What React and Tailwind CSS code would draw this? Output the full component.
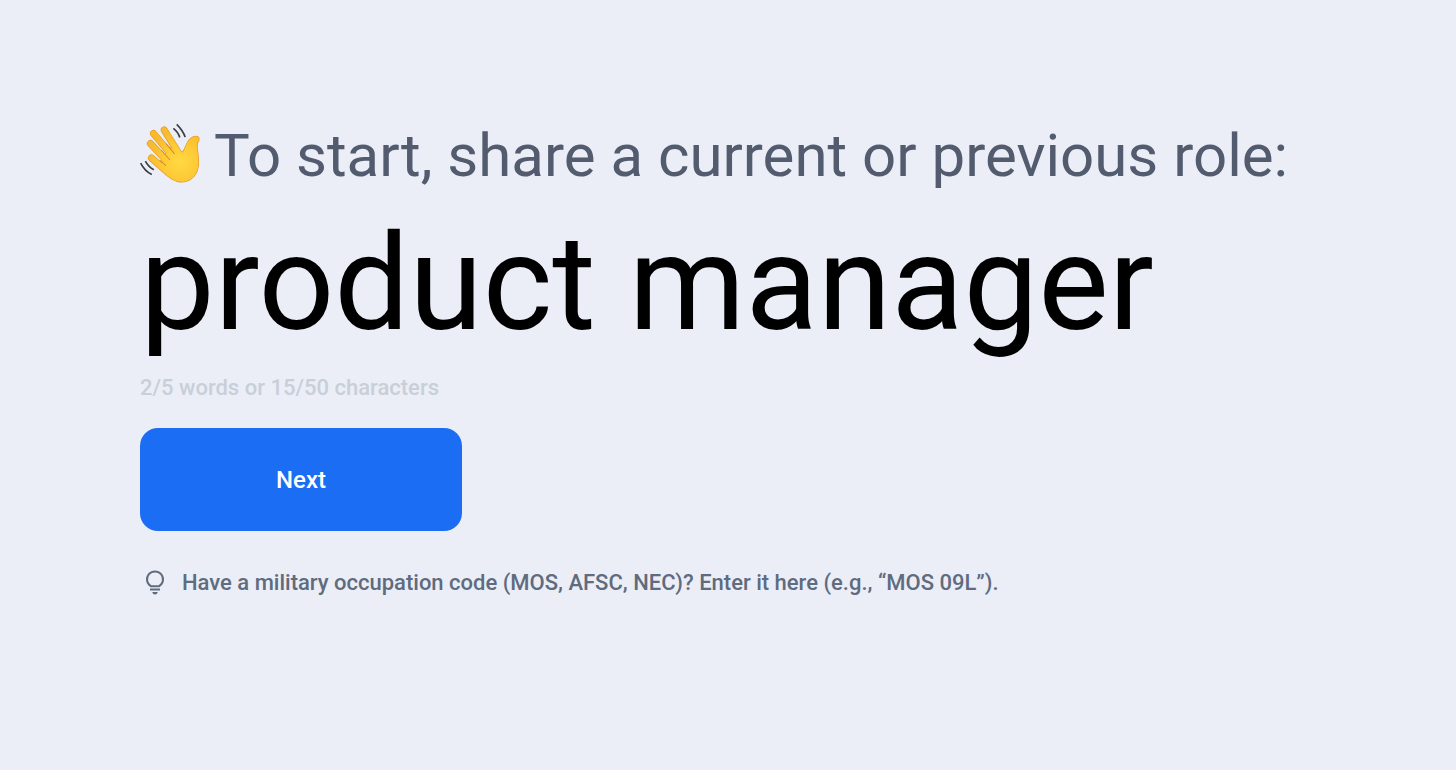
import React, { useState } from 'react'

const MAX_WORDS = 5
const MAX_CHARS = 50

function WavingHand({ className }) {
    const fingers = 'M103 46L148 118M71 56L132 128M62 86L120 148M65 129L116 174'
    const palm =
        'M120 98C136 104 146 116 152 114C159 113 162 106 166 96C172 80 180 66 197 65C207 65 208 73 203 81C197 91 202 104 203 120C205 144 206 166 192 182C178 198 158 202 142 198C124 194 108 178 94 158L98 132Z'

    return (
        <svg className={className} viewBox="31 31 184 184" fill="none" aria-hidden="true">
            <defs>
                <radialGradient id="skin" gradientUnits="userSpaceOnUse" cx="150" cy="140" r="95">
                    <stop offset="0" stopColor="#ffd943" />
                    <stop offset="0.55" stopColor="#fdca36" />
                    <stop offset="1" stopColor="#f8ba2f" />
                </radialGradient>
            </defs>
            <g strokeLinecap="round" strokeLinejoin="round">
                <path d={fingers} stroke="#e69a22" strokeWidth="21" />
                <path d={palm} fill="#e69a22" stroke="#e69a22" strokeWidth="4" />
                <path d={palm} fill="url(#skin)" />
                <path d={fingers} stroke="url(#skin)" strokeWidth="17" />
                <path
                    d="M109 87L133 116M95 106L119 134M90 136L107 151"
                    stroke="#dd8b19"
                    strokeWidth="3"
                />
                <path
                    d="M140 29C151 40 161 53 165 67M130 41C139 48 146 57 149 68M47 138C53 150 62 158 72 164M33 144C41 160 52 171 66 178"
                    stroke="#3b4045"
                    strokeWidth="5"
                    strokeLinecap="butt"
                />
            </g>
        </svg>
    )
}

function Bulb({ className }) {
    return (
        <svg className={className} viewBox="0 0 30 30" fill="none" stroke="currentColor" aria-hidden="true">
            <path d="M10.8 18.2a8 8 0 1 1 8.4 0z" strokeWidth="2" strokeLinejoin="round" />
            <path d="M10 21.5h10" strokeWidth="2" />
            <path d="M12.4 24h5.2a2.6 2.4 0 0 1-5.2 0z" fill="currentColor" stroke="none" />
        </svg>
    )
}

export default function App() {
    const [role, setRole] = useState('product manager')
    const words = role.trim() ? role.trim().split(/\s+/).length : 0

    return (
        <main className="min-h-screen bg-[#ebeef7] px-[140px] pt-[120px] pb-16 font-['Roboto',sans-serif]">
            <form onSubmit={e => e.preventDefault()}>
                <label
                    htmlFor="role"
                    className="flex items-center gap-3 text-[60px] leading-[72px] whitespace-nowrap text-[#525c6e]"
                >
                    <WavingHand className="size-[62px] shrink-0 overflow-visible" />
                    To start, share a current or previous role:
                </label>
                <input
                    id="role"
                    type="text"
                    value={role}
                    maxLength={MAX_CHARS}
                    onChange={e => setRole(e.target.value)}
                    className="mt-3 block h-[160px] w-full bg-transparent text-[133px] text-black outline-none"
                />
                <p className="mt-2 text-[22px] leading-8 font-medium text-[#c8cfd8]">
                    {words}/{MAX_WORDS} words or {role.length}/{MAX_CHARS} characters
                </p>
                <button
                    type="submit"
                    className="mt-6 h-[103px] w-[322px] rounded-[18px] bg-[#1b6ef3] text-2xl font-medium text-white"
                >
                    Next
                </button>
            </form>
            <p className="mt-9 flex items-center gap-3 text-[22px] leading-8 font-medium text-[#5f6b7e]">
                <Bulb className="size-[30px] shrink-0" />
                Have a military occupation code (MOS, AFSC, NEC)? Enter it here (e.g., “MOS 09L”).
            </p>
        </main>
    )
}
